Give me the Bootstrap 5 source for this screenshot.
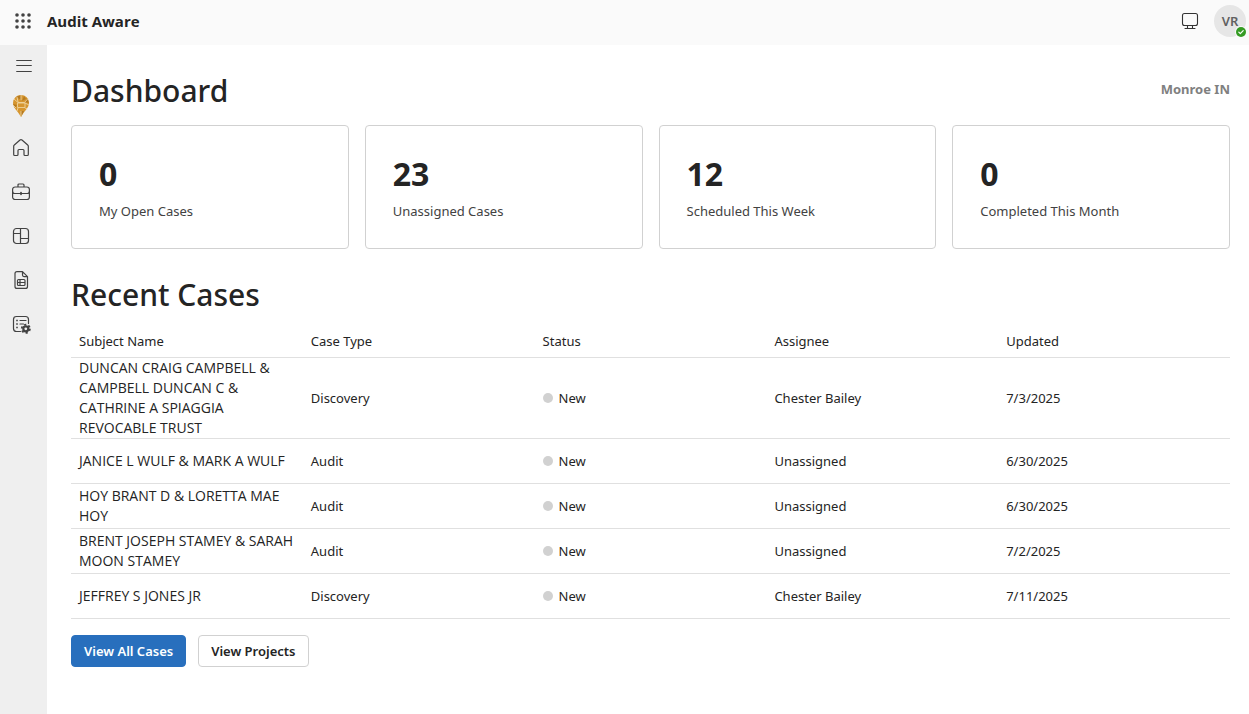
<!DOCTYPE html>
<html lang="en">
<head>
<meta charset="utf-8">
<meta name="viewport" content="width=device-width, initial-scale=1">
<title>Audit Aware</title>
<link href="https://cdn.jsdelivr.net/npm/bootstrap@5.3.0/dist/css/bootstrap.min.css" rel="stylesheet">
<style>
  body { font-family: "Noto Sans", "Open Sans", sans-serif; font-size: 13px; line-height: 20px; color: #242424; background: #fff; }
  .topbar { height: 45px; background: #fafafa; padding: 0 3px 3px 13px; }
  .brand { font-family: "Open Sans", sans-serif; font-size: 15px; font-weight: 700; color: #242424; margin-left: 14px; }
  .icon-btn { border: 0; background: none; padding: 0; color: #424242; line-height: 0; }
  .display-btn { margin-right: 15px; }
  .avatar { width: 32px; height: 32px; background: #e6e6e6; color: #616161; font-size: 13px; font-weight: 600; }
  .presence { right: -1px; bottom: -1px; line-height: 0; }
  .sidebar { width: 47px; background: #efefef; }
  .sidebar .menu-toggle { height: 42px; }
  .side-link { width: 42px; height: 44px; color: #424242; }
  .side-pin { height: 39px; padding-bottom: 2px; }
  main { padding: 24px 19px 24px 24px; min-width: 0; }
  .page-title { font-size: 30px; line-height: 44px; font-weight: 500; margin: 0; }
  .org { font-size: 13px; line-height: 40px; font-weight: 700; color: #808080; }
  .stat { border: 1px solid #d1d1d1; border-radius: 4px; padding: 26px 27px; height: 124px; }
  .stat-value { font-size: 32px; line-height: 44px; font-weight: 700; }
  .stat-label { color: #424242; line-height: 30px; }
  .cases { --bs-table-color: #242424; --bs-table-bg: transparent; table-layout: fixed; border-color: #e0e0e0; }
  .cases > :not(caption) > * > * { padding: 0 8px; }
  .cases th { font-weight: 400; height: 32px; vertical-align: middle; }
  .cases td { height: 45px; }
  .cases .subject { font-family: "Open Sans", sans-serif; font-size: 14px; }
  .dot { width: 10px; height: 10px; background: #d1d1d1; margin-right: 6px; }
  .act { font-size: 13px; line-height: 20px; font-weight: 600; padding: 5px 12px; border-radius: 4px; }
  .act-primary { --bs-btn-bg: #286fbd; --bs-btn-border-color: #286fbd; --bs-btn-color: #fff; --bs-btn-hover-bg: #215fa3; --bs-btn-hover-color: #fff; }
  .act-plain { --bs-btn-bg: #fff; --bs-btn-border-color: #d1d1d1; --bs-btn-color: #242424; }
</style>
</head>
<body class="d-flex flex-column min-vh-100">
<header class="topbar d-flex align-items-center">
  <button class="icon-btn" type="button" aria-label="Apps">
    <svg width="20" height="20" fill="#424242"><g id="r"><circle cx="4" cy="4" r="1.8"/><circle cx="10" cy="4" r="1.8"/><circle cx="16" cy="4" r="1.8"/></g><use href="#r" y="6"/><use href="#r" y="12"/></svg>
  </button>
  <a class="brand text-decoration-none" href="#">Audit Aware</a>
  <button class="icon-btn display-btn ms-auto" type="button" aria-label="Display">
    <svg width="18" height="18" fill="none" stroke="#333" stroke-width="1.1"><rect x="1.500" y="1.500" width="15" height="12" rx="2"/><path d="M6.500 13.500v3M11.500 13.500v3M4 16.500h10" stroke-linecap="round"/></svg>
  </button>
  <button class="icon-btn avatar rounded-circle position-relative d-flex align-items-center justify-content-center" type="button">VR
    <span class="presence position-absolute"><svg width="12" height="12"><circle cx="6" cy="6" r="6" fill="#fafafa"/><circle cx="6" cy="6" r="5" fill="#359b23"/><path d="M3.800 6.200 5.300 7.700 8.200 4.700" fill="none" stroke="#fff" stroke-width="1.200" stroke-linecap="round" stroke-linejoin="round"/></svg></span>
  </button>
</header>
<div class="d-flex flex-grow-1">
  <nav class="sidebar flex-shrink-0 d-flex flex-column align-items-start" aria-label="Main">
    <button class="icon-btn menu-toggle w-100" type="button" aria-label="Menu">
      <svg width="16" height="14" stroke="#424242" stroke-width="1.200" stroke-linecap="round"><path d="M.7 1.500h14.600M.7 6.500h14.600M.7 12.500h14.600"/></svg>
    </button>
    <a class="side-link side-pin d-flex align-items-center justify-content-center" href="#" aria-label="Locations">
      <svg width="18" height="24" viewBox="0 0 18 24"><path d="M9 1a8 8 0 0 0-8 8c0 5 5 8 8 14 3-6 8-9 8-14a8 8 0 0 0-8-8z" fill="#d6962f"/><path d="M9 1v5L4 3zM17 9l-4-1 2-4zM1 10l4 1-2 3zM9 23l3-6H9zM12 2l2 3-4 2z" fill="#b57a22"/><path d="M2 5l4 3.500h6.500l3.500-4M5.500 9v4.500h7.500V9zM4 14l-3-3M13 14l2.500 1M6 14l-1 3M9 17v6M6 8L5 3M9 1v5M13 9l4 2" fill="none" stroke="#f0d9a8" stroke-width=".8"/></svg>
    </a>
    <a class="side-link d-flex align-items-center justify-content-center" href="#" aria-label="Home">
      <svg width="20" height="20" fill="none" stroke="currentColor" stroke-width="1.200" stroke-linejoin="round"><path d="M2.700 8.300q0-.8.6-1.300L9 2q1-.8 2 0l5.700 5q.6.500.6 1.300V16.500q0 1-1 1H14q-1 0-1-1V12.500q0-1-1-1H8q-1 0-1 1v4q0 1-1 1H3.700q-1 0-1-1z"/></svg>
    </a>
    <a class="side-link d-flex align-items-center justify-content-center" href="#" aria-label="Cases">
      <svg width="20" height="20" fill="none" stroke="currentColor" stroke-width="1.200"><rect x="1.600" y="5" width="16.800" height="12.500" rx="2.500"/><path d="M7 5V3q0-1 1-1h4q1 0 1 1v2M1.600 9.500q0 2 2 2h12.800q2 0 2-2"/><path d="M10 10.500v2" stroke-width="1.600" stroke-linecap="round"/></svg>
    </a>
    <a class="side-link d-flex align-items-center justify-content-center" href="#" aria-label="Boards">
      <svg width="20" height="20" fill="none" stroke="currentColor" stroke-width="1.200"><rect x="2.500" y="2.500" width="15" height="15" rx="3"/><path d="M9.500 2.500v15M2.500 7.500h7M9.500 12.500h8"/></svg>
    </a>
    <a class="side-link d-flex align-items-center justify-content-center" href="#" aria-label="Reports">
      <svg width="20" height="20" fill="none" stroke="currentColor" stroke-width="1.200" stroke-linejoin="round"><path d="M11.500 1.600H6q-2 0-2 2v12.800q0 2 2 2h8.500q2 0 2-2V6.600zM11.500 1.600v3.500q0 1.500 1.500 1.500h3.500"/><rect x="6.500" y="9.500" width="7.500" height="6" rx="1"/><path d="M9 9.500v6M6.500 12.500H14"/></svg>
    </a>
    <a class="side-link d-flex align-items-center justify-content-center" href="#" aria-label="Settings">
      <svg width="20" height="20" fill="none" stroke="currentColor" stroke-width="1.200"><path d="M9.500 17.500h-4q-3 0-3-3v-9q0-3 3-3h9q3 0 3 3v4M9 6.500h6M9 10h3.500" stroke-linecap="round"/><path d="M5.200 6.500h1.600M5.200 10h1.600M5.200 13.500h1.600" stroke-width="1.600"/><circle cx="14.800" cy="14.800" r="2.500" stroke-width="2.200"/><circle cx="14.800" cy="14.800" r="4.100" stroke-width="1.800" stroke-dasharray="2.147 2.147"/></svg>
    </a>
  </nav>
  <main class="flex-grow-1">
    <div class="d-flex justify-content-between align-items-start mb-2 pb-1">
      <h1 class="page-title">Dashboard</h1>
      <span class="org">Monroe IN</span>
    </div>
    <div class="row g-3 mb-4">
      <div class="col-3"><div class="stat"><div class="stat-value">0</div><div class="stat-label">My Open Cases</div></div></div>
      <div class="col-3"><div class="stat"><div class="stat-value">23</div><div class="stat-label">Unassigned Cases</div></div></div>
      <div class="col-3"><div class="stat"><div class="stat-value">12</div><div class="stat-label">Scheduled This Week</div></div></div>
      <div class="col-3"><div class="stat"><div class="stat-value">0</div><div class="stat-label">Completed This Month</div></div></div>
    </div>
    <h2 class="page-title mb-2">Recent Cases</h2>
    <table class="table cases align-middle mb-3">
      <thead><tr><th scope="col">Subject Name</th><th scope="col">Case Type</th><th scope="col">Status</th><th scope="col">Assignee</th><th scope="col">Updated</th></tr></thead>
      <tbody>
        <tr><td class="subject">DUNCAN CRAIG CAMPBELL &amp; CAMPBELL DUNCAN C &amp; CATHRINE A SPIAGGIA REVOCABLE TRUST</td><td>Discovery</td><td><div class="d-flex align-items-center"><span class="dot rounded-circle"></span>New</div></td><td>Chester Bailey</td><td>7/3/2025</td></tr>
        <tr><td class="subject">JANICE L WULF &amp; MARK A WULF</td><td>Audit</td><td><div class="d-flex align-items-center"><span class="dot rounded-circle"></span>New</div></td><td>Unassigned</td><td>6/30/2025</td></tr>
        <tr><td class="subject">HOY BRANT D &amp; LORETTA MAE HOY</td><td>Audit</td><td><div class="d-flex align-items-center"><span class="dot rounded-circle"></span>New</div></td><td>Unassigned</td><td>6/30/2025</td></tr>
        <tr><td class="subject">BRENT JOSEPH STAMEY &amp; SARAH MOON STAMEY</td><td>Audit</td><td><div class="d-flex align-items-center"><span class="dot rounded-circle"></span>New</div></td><td>Unassigned</td><td>7/2/2025</td></tr>
        <tr><td class="subject">JEFFREY S JONES JR</td><td>Discovery</td><td><div class="d-flex align-items-center"><span class="dot rounded-circle"></span>New</div></td><td>Chester Bailey</td><td>7/11/2025</td></tr>
      </tbody>
    </table>
    <div class="d-flex gap-2">
      <button class="btn act act-primary me-1" type="button">View All Cases</button>
      <button class="btn act act-plain" type="button">View Projects</button>
    </div>
  </main>
</div>
<script src="https://cdn.jsdelivr.net/npm/bootstrap@5.3.0/dist/js/bootstrap.bundle.min.js"></script>
</body>
</html>
